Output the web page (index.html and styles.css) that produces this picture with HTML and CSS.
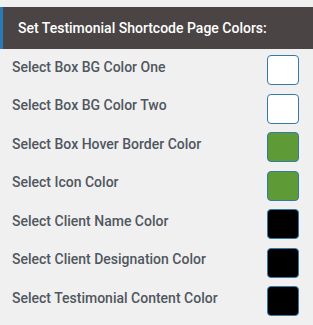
FILE: index.html
```html
<!DOCTYPE html>
<html lang="en">
<head>
    <meta charset="UTF-8">
    <meta name="viewport" content="width=device-width, initial-scale=1.0">
    <title>Testimonial Colors</title>
    <link rel="stylesheet" href="styles.css">
</head>
<body>
    <div class="panel">
        <h2 class="panel-title">Set Testimonial Shortcode Page Colors:</h2>

        <!-- Color option rows -->
        <ul class="color-list">
            <li><span class="label">Select Box BG Color One</span><span class="swatch white"></span></li>
            <li><span class="label">Select Box BG Color Two</span><span class="swatch white"></span></li>
            <li><span class="label">Select Box Hover Border Color</span><span class="swatch green"></span></li>
            <li><span class="label">Select Icon Color</span><span class="swatch green"></span></li>
            <li><span class="label">Select Client Name Color</span><span class="swatch black"></span></li>
            <li><span class="label">Select Client Designation Color</span><span class="swatch black"></span></li>
            <li><span class="label">Select Testimonial Content Color</span><span class="swatch black"></span></li>
        </ul>
    </div>
</body>
</html>
```

FILE: styles.css
```css
body {
    margin: 0;
    font-family: Roboto, "Liberation Sans", sans-serif;
    background-color: #f0f0f1;
    color: #50575e;
}

.panel {
    padding-top: 7px;
}

.panel-title {
    margin: 0;
    height: 42px;
    line-height: 42px;
    padding-left: 15px;
    border-left: 3px solid #2a7ab8;
    background-color: #4a4544;
    color: #fff;
    font-size: 14px;
    font-weight: 500;
}

.color-list {
    list-style-type: none;
    margin: 6px 0 0;
    padding: 0 14px 0 12px;
    display: flex;
    flex-direction: column;
    gap: 8.5px;
}

.color-list li {
    display: flex;
    justify-content: space-between;
    align-items: center;
    height: 30px;
    font-size: 14px;
    font-weight: 500;
}

/* label sits a little above the swatch centre */
.label {
    margin-bottom: 7px;
}

.swatch {
    width: 30px;
    height: 28px;
    border: 1px solid #3579a8;
    border-radius: 4px;
}

.white { background-color: #fff; }
.green { background-color: #5e9a36; }
.black { background-color: #000; }
```
